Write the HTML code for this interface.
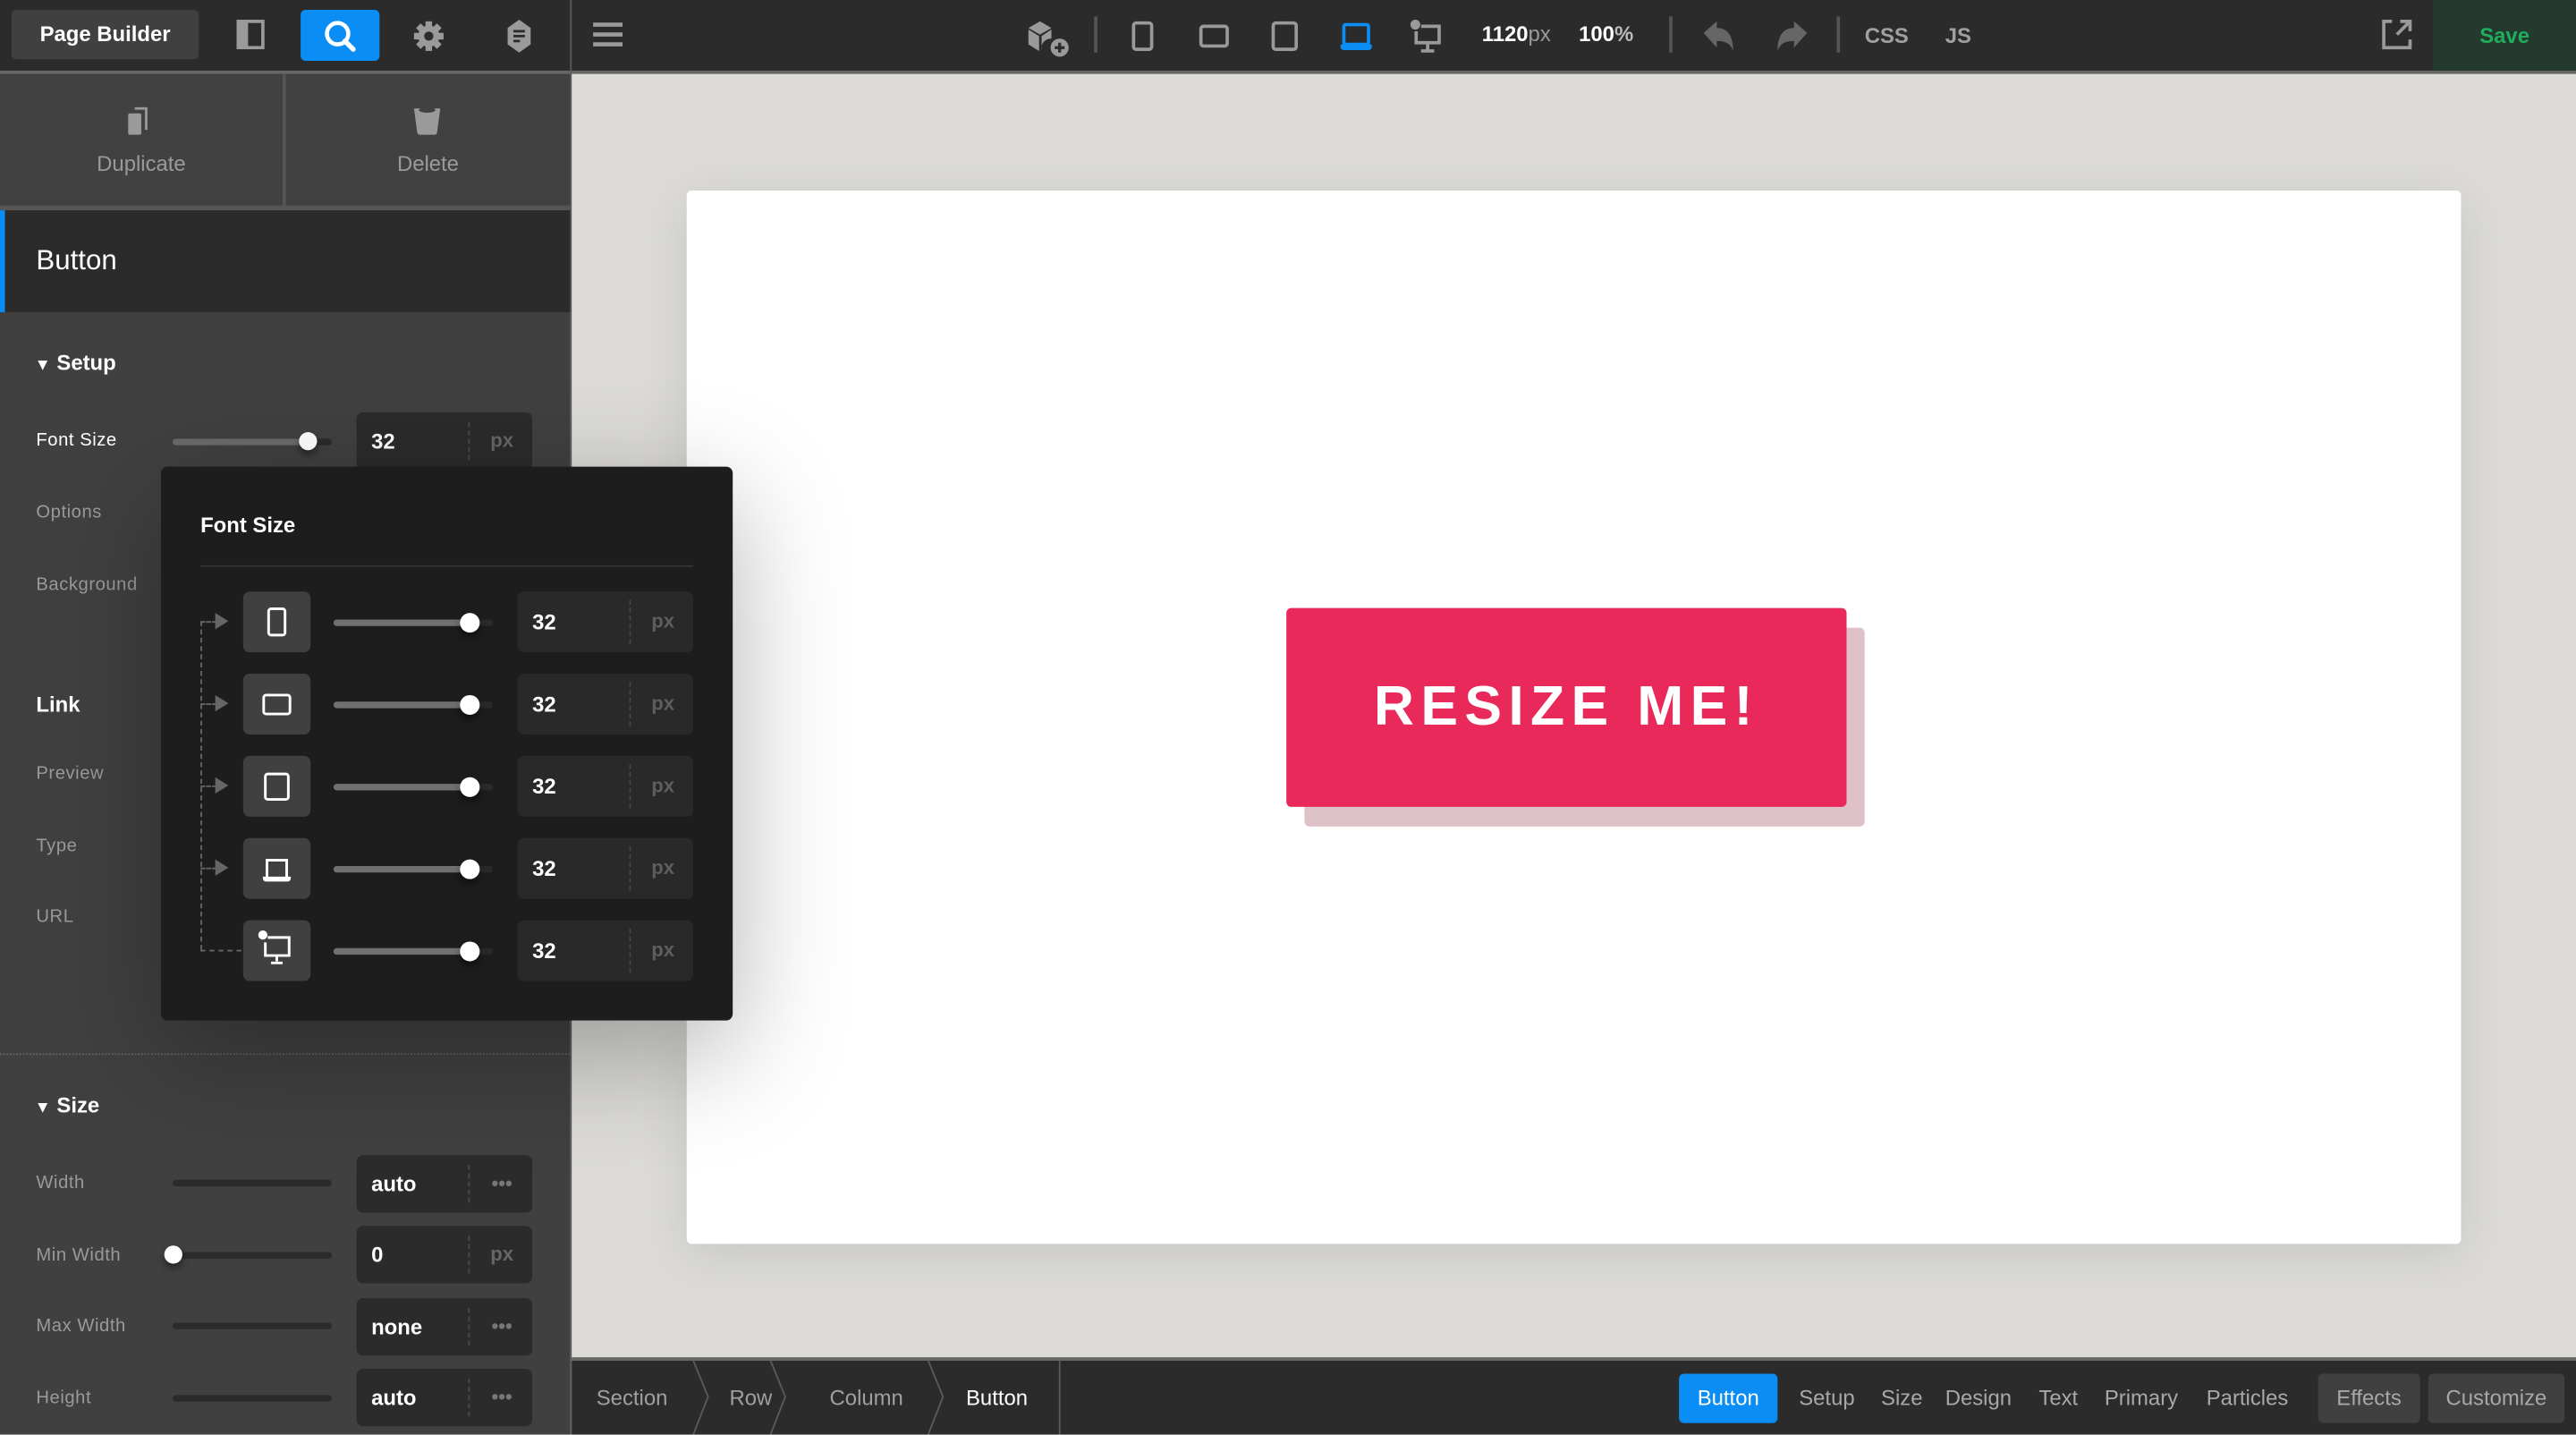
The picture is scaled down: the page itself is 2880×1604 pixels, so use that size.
<!DOCTYPE html>
<html><head><meta charset="utf-8">
<style>
html,body{margin:0;padding:0;width:2880px;height:1604px;overflow:hidden;background:#dcdbd7;}
#s{position:absolute;left:0;top:0;width:1568px;height:873px;transform:scale(1.836735);transform-origin:0 0;font-family:"Liberation Sans",sans-serif;background:#dcdbd7;overflow:hidden;}
.a{position:absolute;}
.t{position:absolute;white-space:nowrap;}
.lbl{position:absolute;left:22px;font-size:11px;color:#9a9a9a;letter-spacing:.3px;}
.inp{position:absolute;left:217px;width:107px;height:35px;background:#2b2b2b;border-radius:4px;}
.inp .v{position:absolute;left:9px;top:0;line-height:35px;font-size:13px;font-weight:bold;color:#fff;}
.inp .u{position:absolute;left:68px;top:6px;height:23px;border-left:1px dashed #4a4a4a;width:39px;text-align:center;line-height:23px;font-size:12px;color:#666;font-weight:bold;}
.trk{position:absolute;left:105px;width:97px;height:4px;background:#2b2b2b;border-radius:2px;}
.knob{position:absolute;width:11px;height:11px;border-radius:50%;background:#fff;box-shadow:0 3px 4px rgba(0,0,0,.4);}
.prow{position:absolute;left:0;width:348px;height:37px;}
.ibox{position:absolute;left:50px;top:0;width:41px;height:37px;background:#404040;border-radius:4px;}
.ptrk{position:absolute;left:105px;top:17px;width:97px;height:4px;background:#2a2a2a;border-radius:2px;}
.ptrk i{position:absolute;left:0;top:0;width:83px;height:4px;background:#707070;border-radius:2px;}
.ptrk b{position:absolute;left:77px;top:-4px;width:12px;height:12px;border-radius:50%;background:#fff;box-shadow:0 3px 5px rgba(0,0,0,.5);}
.pin{position:absolute;left:217px;top:0;width:107px;height:37px;background:#292929;border-radius:4px;}
.pin .v{position:absolute;left:9px;line-height:37px;font-size:13px;font-weight:bold;color:#fff;}
.pin .u{position:absolute;left:68px;top:5px;height:27px;border-left:1px dashed #444;width:39px;text-align:center;line-height:27px;font-size:12px;color:#5e5e5e;font-weight:bold;}
.arr{position:absolute;left:24px;top:18px;width:10px;border-top:1px dashed #666;}
.arr:after{content:"";position:absolute;left:9px;top:-6px;border-left:8px solid #666;border-top:5px solid transparent;border-bottom:5px solid transparent;}
.bc{position:absolute;top:0;height:45px;line-height:45px;font-size:13px;color:#a0a0a0;}
.tab{position:absolute;top:8px;height:30px;line-height:30px;font-size:13px;color:#a8a8a8;}
</style></head><body>
<div id="s">
<div class="a" style="left:0;top:0;width:1568px;height:43px;background:#2b2b2b"></div>
<div class="a" style="left:0;top:43px;width:1568px;height:2px;background:#666"></div>
<div class="a" style="left:347px;top:0;width:1px;height:873px;background:#5a5a5a"></div>
<div class="a" style="left:7px;top:6px;width:114px;height:30px;background:#404040;border-radius:3px;color:#fff;font-size:13px;font-weight:bold;line-height:30px;text-align:center">Page Builder</div>
<svg class="a" style="left:144px;top:12px" width="18" height="18"><rect x="1" y="1" width="15" height="16" fill="none" stroke="#9a9a9a" stroke-width="2"/><rect x="1" y="1" width="6" height="16" fill="#9a9a9a"/></svg>
<div class="a" style="left:183px;top:6px;width:48px;height:31px;background:#0a8ef5;border-radius:3px"></div>
<svg class="a" style="left:196px;top:11px" width="22" height="22"><circle cx="9.5" cy="9.5" r="6.5" fill="none" stroke="#fff" stroke-width="2.5"/><path d="M14 14l5 5" stroke="#fff" stroke-width="3" stroke-linecap="round"/></svg>
<svg class="a" style="left:251px;top:12px" width="20" height="20"><g fill="#9a9a9a"><circle cx="10" cy="10" r="6.5"/><rect x="8" y="1" width="4" height="18"/><rect x="1" y="8" width="18" height="4"/><rect x="8" y="1" width="4" height="18" transform="rotate(45 10 10)"/><rect x="8" y="1" width="4" height="18" transform="rotate(-45 10 10)"/></g><circle cx="10" cy="10" r="2.8" fill="#2b2b2b"/></svg>
<svg class="a" style="left:306px;top:11px" width="20" height="22"><path d="M10 1l7 5v10l-7 5-7-5V6z" fill="#9a9a9a"/><path d="M6.5 8h7M6.5 11h7M6.5 14h4" stroke="#2b2b2b" stroke-width="1.5"/></svg>
<svg class="a" style="left:361px;top:13px" width="18" height="16"><path d="M0 2h18M0 8h18M0 14h18" stroke="#9a9a9a" stroke-width="2.5"/></svg>
<svg class="a" style="left:625px;top:11px" width="28" height="24"><path d="M1 6l7-4 7 4-7 4z" fill="#9a9a9a"/><path d="M1 7l6.5 4v9L1 16z" fill="#9a9a9a"/><path d="M15 7v5.5a6 6 0 0 0-6 7.5V11z" fill="#9a9a9a"/><circle cx="20" cy="18" r="5.5" fill="#9a9a9a"/><path d="M20 15v6M17 18h6" stroke="#2b2b2b" stroke-width="1.8"/></svg>
<div class="a" style="left:666px;top:10px;width:2px;height:22px;background:#555"></div>
<svg class="a" style="left:688px;top:12px" width="16" height="20" fill="none" stroke="#9a9a9a" stroke-width="2"><rect x="2" y="2" width="11" height="16" rx="1.5"/></svg>
<svg class="a" style="left:729px;top:13px" width="22" height="18" fill="none" stroke="#9a9a9a" stroke-width="2"><rect x="2" y="3" width="16" height="12" rx="1.5"/></svg>
<svg class="a" style="left:773px;top:12px" width="20" height="20" fill="none" stroke="#9a9a9a" stroke-width="2"><rect x="2" y="2" width="14" height="16" rx="1.5"/></svg>
<svg class="a" style="left:815px;top:12px" width="22" height="20"><rect x="3" y="3" width="15" height="12" rx="1" fill="none" stroke="#0a8ef5" stroke-width="2"/><path d="M1 15h19v1.5a2 2 0 0 1-2 2H3a2 2 0 0 1-2-2z" fill="#0a8ef5"/></svg>
<svg class="a" style="left:857px;top:11px" width="24" height="22"><circle cx="4.5" cy="4" r="3" fill="#9a9a9a"/><path d="M8 5h11v10H5V8" fill="none" stroke="#9a9a9a" stroke-width="2"/><path d="M12 15v4M8 20h8" stroke="#9a9a9a" stroke-width="2"/></svg>
<div class="t" style="left:902px;top:13px;font-size:13px;font-weight:bold;color:#fff">1120<span style="color:#999;font-weight:normal">px</span></div>
<div class="t" style="left:961px;top:13px;font-size:13px;font-weight:bold;color:#fff">100<span style="color:#bbb">%</span></div>
<div class="a" style="left:1016px;top:10px;width:2px;height:22px;background:#555"></div>
<svg class="a" style="left:1036px;top:12px" width="22" height="20"><path d="M1 8l8-7v4c6 0 10 4 10 14-2-5-5-6-10-6v4z" fill="#666"/></svg>
<svg class="a" style="left:1079px;top:12px" width="22" height="20"><path d="M21 8l-8-7v4C7 5 3 9 3 19c2-5 5-6 10-6v4z" fill="#666"/></svg>
<div class="a" style="left:1118px;top:10px;width:2px;height:22px;background:#555"></div>
<div class="t" style="left:1135px;top:14px;font-size:13px;font-weight:bold;color:#a0a0a0">CSS</div>
<div class="t" style="left:1184px;top:14px;font-size:13px;font-weight:bold;color:#a0a0a0">JS</div>
<svg class="a" style="left:1449px;top:11px" width="20" height="20" fill="none" stroke="#9a9a9a" stroke-width="2"><path d="M7 2H2v16h16v-5"/><path d="M10 10l8-8M12 2h6v6"/></svg>
<div class="a" style="left:1481px;top:0;width:87px;height:43px;background:#253a2e;color:#1fae5c;font-size:13px;font-weight:bold;line-height:43px;text-align:center">Save</div>

<div class="a" style="left:0;top:45px;width:347px;height:828px;background:#404040"></div>
<div class="a" style="left:0;top:45px;width:347px;height:82px;background:#414141"></div>
<div class="a" style="left:172px;top:45px;width:2px;height:82px;background:#555"></div>
<div class="a" style="left:0;top:125px;width:347px;height:3px;background:#555"></div>
<svg class="a" style="left:77px;top:64px" width="18" height="20"><path d="M5 2h7v13" fill="none" stroke="#9a9a9a" stroke-width="1.5"/><rect x="1" y="5" width="8" height="13" rx="1" fill="#9a9a9a"/></svg>
<svg class="a" style="left:250px;top:63px" width="20" height="20"><path d="M2 3h16l-2 15a2 2 0 0 1-2 1H6a2 2 0 0 1-2-1z" fill="#9a9a9a"/><ellipse cx="10" cy="4" rx="5" ry="1.6" fill="#404040"/></svg>
<div class="t" style="left:0;width:172px;text-align:center;top:92px;font-size:13px;color:#9a9a9a">Duplicate</div>
<div class="t" style="left:174px;width:173px;text-align:center;top:92px;font-size:13px;color:#9a9a9a">Delete</div>
<div class="a" style="left:0;top:128px;width:347px;height:62px;background:#2b2b2b"></div>
<div class="a" style="left:0;top:128px;width:3px;height:62px;background:#0a8ef5"></div>
<div class="t" style="left:22px;top:149px;font-size:17px;color:#fff">Button</div>
<div class="t" style="left:21px;top:213px;font-size:13px;font-weight:bold;color:#fff"><span style="font-size:10px">▼</span> Setup</div>
<div class="lbl" style="top:262px;color:#fff">Font Size</div>
<div class="trk" style="top:267px;background:#2b2b2b"></div><div class="a" style="left:105px;top:267px;width:83px;height:4px;background:#6a6a6a;border-radius:2px"></div>
<div class="knob" style="left:182px;top:263px"></div>
<div class="inp" style="top:251px"><div class="v">32</div><div class="u">px</div></div>
<div class="lbl" style="top:306px">Options</div>
<div class="lbl" style="top:350px">Background</div>
<div class="t" style="left:22px;top:421px;font-size:13px;font-weight:bold;color:#fff">Link</div>
<div class="lbl" style="top:465px">Preview</div>
<div class="lbl" style="top:509px">Type</div>
<div class="lbl" style="top:552px">URL</div>
<div class="a" style="left:0;top:641px;width:347px;border-top:1px dotted #666"></div>
<div class="t" style="left:21px;top:665px;font-size:13px;font-weight:bold;color:#fff"><span style="font-size:10px">▼</span> Size</div>
<div class="lbl" style="top:714px">Width</div><div class="trk" style="top:718px"></div>
<div class="inp" style="top:703px"><div class="v">auto</div><div class="u" style="color:#777">•••</div></div>
<div class="lbl" style="top:758px">Min Width</div><div class="trk" style="top:762px"></div><div class="knob" style="left:100px;top:758px"></div>
<div class="inp" style="top:746px"><div class="v">0</div><div class="u">px</div></div>
<div class="lbl" style="top:801px">Max Width</div><div class="trk" style="top:805px"></div>
<div class="inp" style="top:790px"><div class="v">none</div><div class="u" style="color:#777">•••</div></div>
<div class="lbl" style="top:845px">Height</div><div class="trk" style="top:849px"></div>
<div class="inp" style="top:833px"><div class="v">auto</div><div class="u" style="color:#777">•••</div></div>

<div class="a" style="left:418px;top:116px;width:1080px;height:641px;background:#fff;border-radius:3px;box-shadow:0 6px 30px rgba(0,0,0,.1)"></div>
<div class="a" style="left:794px;top:382px;width:341px;height:121px;background:#dfc2c7;border-radius:3px"></div>
<div class="a" style="left:783px;top:370px;width:341px;height:121px;background:#e8295a;border-radius:3px;color:#fff;font-size:34px;font-weight:bold;letter-spacing:4px;line-height:121px;text-align:center">RESIZE ME!</div>

<div class="a" style="left:98px;top:284px;width:348px;height:337px;background:#1d1d1d;border-radius:4px;box-shadow:0 20px 90px rgba(0,0,0,.3)">
<div class="t" style="left:24px;top:28px;font-size:13px;font-weight:bold;color:#fff">Font Size</div>
<div class="a" style="left:24px;top:60px;width:300px;height:1px;background:#353535"></div>
<div class="a" style="left:24px;top:94px;height:200px;border-left:1px dashed #666"></div>
<div class="a" style="left:24px;top:294px;width:25px;border-top:1px dashed #666"></div>
<div class="prow" style="top:76px"><div class="arr"></div><div class="ibox"><svg width="41" height="37" fill="none" stroke="#fff" stroke-width="1.6"><rect x="15.5" y="10.5" width="10" height="16" rx="1.5"/></svg></div><div class="ptrk"><i></i><b></b></div><div class="pin"><div class="v">32</div><div class="u">px</div></div></div>
<div class="prow" style="top:126px"><div class="arr"></div><div class="ibox"><svg width="41" height="37" fill="none" stroke="#fff" stroke-width="1.6"><rect x="12.5" y="13" width="16" height="11.5" rx="1.5"/></svg></div><div class="ptrk"><i></i><b></b></div><div class="pin"><div class="v">32</div><div class="u">px</div></div></div>
<div class="prow" style="top:176px"><div class="arr"></div><div class="ibox"><svg width="41" height="37" fill="none" stroke="#fff" stroke-width="1.6"><rect x="13.5" y="11" width="14" height="15.5" rx="1.5"/></svg></div><div class="ptrk"><i></i><b></b></div><div class="pin"><div class="v">32</div><div class="u">px</div></div></div>
<div class="prow" style="top:226px"><div class="arr"></div><div class="ibox"><svg width="41" height="37"><path d="M14.5 24V13.5h12V24" fill="none" stroke="#fff" stroke-width="1.6"/><path d="M12.5 24h16v.5a1.5 1.5 0 0 1-1.5 1.5H14a1.5 1.5 0 0 1-1.5-1.5z" fill="#fff" stroke="#fff"/></svg></div><div class="ptrk"><i></i><b></b></div><div class="pin"><div class="v">32</div><div class="u">px</div></div></div>
<div class="prow" style="top:276px"><div class="ibox"><svg width="41" height="37"><circle cx="12" cy="9" r="2.8" fill="#fff"/><path d="M15 10.5h13v11H13.5v-8" fill="none" stroke="#fff" stroke-width="1.6"/><path d="M20.5 21.5v3.5M17 26h7" stroke="#fff" stroke-width="1.6"/></svg></div><div class="ptrk"><i></i><b></b></div><div class="pin"><div class="v">32</div><div class="u">px</div></div></div>
</div>

<div class="a" style="left:348px;top:826px;width:1220px;height:2px;background:#666"></div>
<div class="a" style="left:348px;top:828px;width:1220px;height:45px;background:#2b2b2b"></div>
<svg class="a" style="left:348px;top:828px" width="300" height="45" fill="none" stroke="#5a5a5a" stroke-width="1"><path d="M74 0l9 22-9 23M121 0l9 22-9 23M217 0l9 22-9 23M297 0v45"/></svg>
<div class="bc" style="left:363px;top:828px">Section</div>
<div class="bc" style="left:444px;top:828px">Row</div>
<div class="bc" style="left:505px;top:828px">Column</div>
<div class="bc" style="left:588px;top:828px;color:#fff">Button</div>
<div class="tab" style="left:1022px;top:836px;width:60px;background:#0a8ef5;color:#fff;border-radius:3px;text-align:center">Button</div>
<div class="tab" style="left:1095px;top:836px">Setup</div>
<div class="tab" style="left:1145px;top:836px">Size</div>
<div class="tab" style="left:1184px;top:836px">Design</div>
<div class="tab" style="left:1241px;top:836px">Text</div>
<div class="tab" style="left:1281px;top:836px">Primary</div>
<div class="tab" style="left:1343px;top:836px">Particles</div>
<div class="tab" style="left:1411px;top:836px;width:62px;background:#404040;border-radius:3px;text-align:center">Effects</div>
<div class="tab" style="left:1478px;top:836px;width:83px;background:#404040;border-radius:3px;text-align:center">Customize</div>
</div>
</body></html>
